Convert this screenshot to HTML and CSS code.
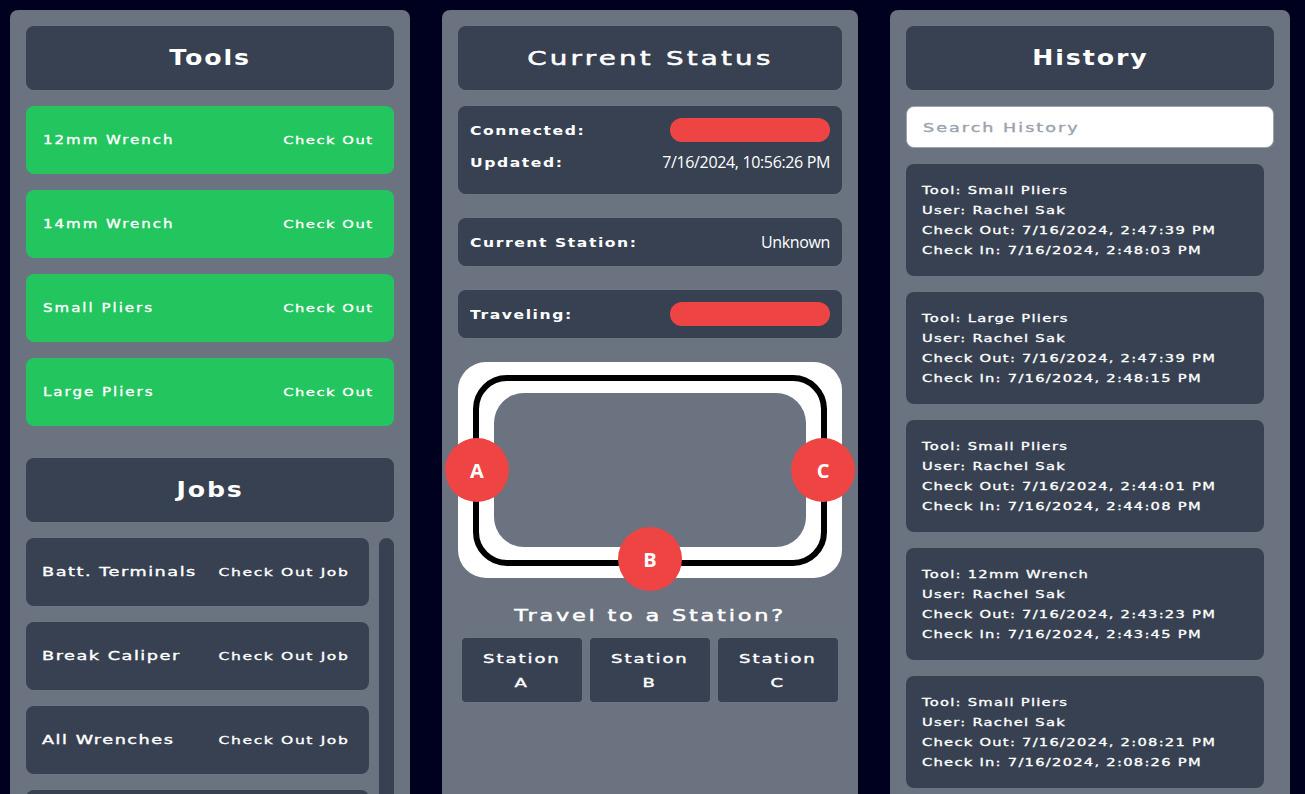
FILE: index.html
```html
<!DOCTYPE html>
<html lang="en">
<head>
    <meta charset="UTF-8">
    <meta name="viewport" content="width=device-width, initial-scale=1.0">
    <title>Tool Cart</title>
    <link rel="stylesheet" href="styles.css">
</head>
<body>

<div class="page">
    <!-- tools and jobs -->
    <section class="panel side">
        <h2 class="title"><span>Tools</span></h2>
        <div class="stack tools">
            <div class="row tool"><span class="name">12mm Wrench</span><span class="action">Check Out</span></div>
            <div class="row tool"><span class="name">14mm Wrench</span><span class="action">Check Out</span></div>
            <div class="row tool"><span class="name">Small Pliers</span><span class="action">Check Out</span></div>
            <div class="row tool"><span class="name">Large Pliers</span><span class="action">Check Out</span></div>
        </div>
        <h2 class="title"><span>Jobs</span></h2>
        <div class="jobs">
            <div class="stack job-list">
                <div class="row job"><span class="name">Batt. Terminals</span><span class="action">Check Out Job</span></div>
                <div class="row job"><span class="name">Break Caliper</span><span class="action">Check Out Job</span></div>
                <div class="row job"><span class="name">All Wrenches</span><span class="action">Check Out Job</span></div>
                <div class="row job"></div>
            </div>
            <div class="scrollbar"></div>
        </div>
    </section>

    <!-- current status -->
    <section class="panel middle">
        <h2 class="title"><span>Current Status</span></h2>
        <div class="info connected-box">
            <div class="info-line">
                <span class="label">Connected:</span>
                <span class="pill"></span>
            </div>
            <div class="info-line">
                <span class="label">Updated:</span>
                <span class="value">7/16/2024, 10:56:26 PM</span>
            </div>
        </div>
        <div class="info">
            <div class="info-line">
                <span class="label">Current Station:</span>
                <span class="value">Unknown</span>
            </div>
        </div>
        <div class="info">
            <div class="info-line">
                <span class="label">Traveling:</span>
                <span class="pill"></span>
            </div>
        </div>

        <div class="map">
            <div class="ring">
                <div class="hole"></div>
            </div>
            <span class="stop stop-a">A</span>
            <span class="stop stop-b">B</span>
            <span class="stop stop-c">C</span>
        </div>

        <h3 class="travel-title"><span>Travel to a Station?</span></h3>
        <div class="stations">
            <button class="station" type="button"><span>Station</span><span>A</span></button>
            <button class="station" type="button"><span>Station</span><span>B</span></button>
            <button class="station" type="button"><span>Station</span><span>C</span></button>
        </div>
    </section>

    <!-- history -->
    <section class="panel side">
        <h2 class="title"><span>History</span></h2>
        <div class="search"><span>Search History</span></div>
        <div class="history">
            <div class="entry">
                <p>Tool: Small Pliers</p>
                <p>User: Rachel Sak</p>
                <p>Check Out: 7/16/2024, 2:47:39 PM</p>
                <p>Check In: 7/16/2024, 2:48:03 PM</p>
            </div>
            <div class="entry">
                <p>Tool: Large Pliers</p>
                <p>User: Rachel Sak</p>
                <p>Check Out: 7/16/2024, 2:47:39 PM</p>
                <p>Check In: 7/16/2024, 2:48:15 PM</p>
            </div>
            <div class="entry">
                <p>Tool: Small Pliers</p>
                <p>User: Rachel Sak</p>
                <p>Check Out: 7/16/2024, 2:44:01 PM</p>
                <p>Check In: 7/16/2024, 2:44:08 PM</p>
            </div>
            <div class="entry">
                <p>Tool: 12mm Wrench</p>
                <p>User: Rachel Sak</p>
                <p>Check Out: 7/16/2024, 2:43:23 PM</p>
                <p>Check In: 7/16/2024, 2:43:45 PM</p>
            </div>
            <div class="entry">
                <p>Tool: Small Pliers</p>
                <p>User: Rachel Sak</p>
                <p>Check Out: 7/16/2024, 2:08:21 PM</p>
                <p>Check In: 7/16/2024, 2:08:26 PM</p>
            </div>
        </div>
    </section>
</div>

</body>
</html>
```

FILE: styles.css
```css
* { box-sizing: border-box; }
html, body { margin: 0; height: 100%; overflow: hidden; }
body { background: #00001f; color: #fff; font-family: "DejaVu Sans", sans-serif; }
p, h2, h3 { margin: 0; }

.page { display: flex; gap: 32px; height: 100vh; padding: 10px 15px 0 10px; }
.panel { display: flex; flex-direction: column; gap: 16px; padding: 16px; background: #6b7280; border-radius: 8px 8px 0 0; overflow: hidden; }
.side { width: 400px; }
.middle { width: 416px; }

/* the wide techno look of the original font comes from stretching DejaVu */
.title { flex: none; height: 64px; line-height: 64px; text-align: center; background: #374151; border-radius: 8px; font-size: 21px; font-weight: bold; letter-spacing: 1.6px; }
.title span { display: inline-block; transform: scaleX(1.2); }
.middle .title { font-size: 19px; font-weight: normal; letter-spacing: 2.2px; -webkit-text-stroke: 0.5px #fff; }
.middle .title span { transform: scaleX(1.46); }

.stack { display: flex; flex-direction: column; gap: 16px; }
.tools { margin-bottom: 16px; }
.row { flex: none; display: flex; justify-content: space-between; align-items: center; height: 68px; border-radius: 8px; }
.tool { padding: 0 20px 0 17px; background: #22c55e; }
.job { padding: 0 20px 0 16px; background: #374151; }
.name { font-size: 12px; letter-spacing: 1.6px; -webkit-text-stroke: 0.35px #fff; transform: scaleX(1.25); transform-origin: left; }
.action { font-size: 10.5px; letter-spacing: 1.1px; -webkit-text-stroke: 0.3px #fff; transform: scaleX(1.4); transform-origin: right; }
.job .name { letter-spacing: 1.05px; transform: scaleX(1.47); }
.job .action { transform: scaleX(1.48); }

.jobs { display: flex; gap: 10px; }
.job-list { width: 343px; }
.scrollbar { width: 15px; background: #374151; border-radius: 8px; }

.info { padding: 12px; background: #374151; border-radius: 8px; margin-bottom: 8px; }
.connected-box { padding-bottom: 20px; }
.info-line { display: flex; justify-content: space-between; align-items: center; height: 24px; }
.info-line + .info-line { margin-top: 8px; }
.label { padding-top: 1px; font-size: 12px; font-weight: bold; letter-spacing: 1.2px; transform: scaleX(1.3); transform-origin: left; }
.value { font-family: "Open Sans", sans-serif; font-size: 16px; letter-spacing: -0.35px; }
.pill { width: 160px; height: 24px; background: #ef4444; border-radius: 12px; }

.map { position: relative; flex: none; display: flex; height: 216px; padding: 13px 15px 12px; background: #fff; border-radius: 28px; }
.ring { flex: 1; display: flex; padding: 12px 15px 13px; border: 6px solid #000; border-radius: 34px; }
.hole { flex: 1; background: #6b7280; border-radius: 30px; }
.stop { position: absolute; display: flex; align-items: center; justify-content: center; width: 64px; height: 64px; background: #ef4444; border-radius: 50%; font-family: "Open Sans", sans-serif; font-size: 20px; font-weight: bold; }
.stop-a { left: -13px; top: 76px; }
.stop-b { left: 160px; top: 165px; }
.stop-c { right: -13px; top: 76px; }

.travel-title { text-align: center; font-size: 16px; font-weight: normal; letter-spacing: 2px; line-height: 24px; margin-top: 10px; margin-bottom: -6px; -webkit-text-stroke: 0.45px #fff; }
.travel-title span { display: inline-block; transform: scaleX(1.4); }
.stations { display: flex; gap: 8px; padding: 0 4px; }
.station { flex: 1 1 0; display: flex; flex-direction: column; align-items: center; justify-content: center; height: 64px; padding: 2px 0 0; color: #fff; background: #374151; border: 0; border-radius: 4px; font-family: "DejaVu Sans", sans-serif; font-size: 12px; line-height: 24px; letter-spacing: 1.3px; -webkit-text-stroke: 0.35px #fff; }
.station span { transform: scaleX(1.5); }

.search { flex: none; display: flex; align-items: center; width: 100%; height: 42px; padding: 1px 16px 0; color: #9ca3af; background: #fff; border: 1px solid #9ca3af; border-radius: 8px; font-size: 12px; letter-spacing: 1.4px; -webkit-text-stroke: 0.35px #9ca3af; }
.search span { transform: scaleX(1.46); transform-origin: left; }
.history { display: flex; flex-direction: column; gap: 16px; width: 358px; }
.entry { flex: none; height: 112px; padding: 16px; background: #374151; border-radius: 8px; font-size: 10.5px; line-height: 20px; letter-spacing: 0.9px; -webkit-text-stroke: 0.3px #fff; }
.entry p { transform: scaleX(1.4); transform-origin: left; white-space: nowrap; }
```
